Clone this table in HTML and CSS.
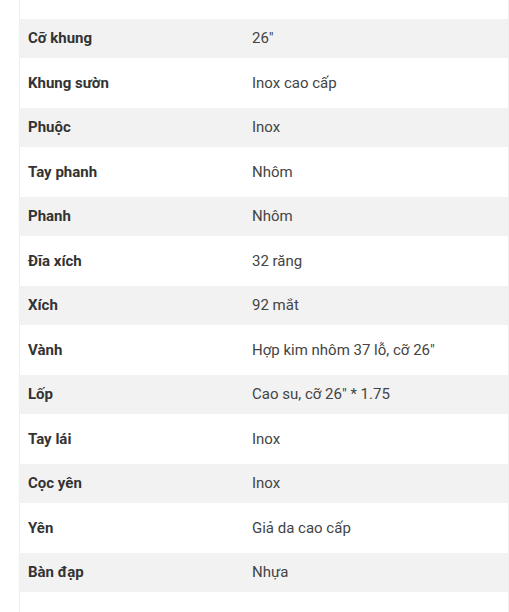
FILE: index.html
```html
<!DOCTYPE html>
<html lang="vi">
<head>
<meta charset="utf-8">
<link rel="stylesheet" href="styles.css">
</head>
<body>
<div class="wrap">
  <div class="specs">
    <div class="row odd"><div class="k">Cỡ khung</div><div class="v">26"</div></div>
    <div class="row even"><div class="k">Khung sườn</div><div class="v">Inox cao cấp</div></div>
    <div class="row odd"><div class="k">Phuộc</div><div class="v">Inox</div></div>
    <div class="row even"><div class="k">Tay phanh</div><div class="v">Nhôm</div></div>
    <div class="row odd"><div class="k">Phanh</div><div class="v">Nhôm</div></div>
    <div class="row even"><div class="k">Đĩa xích</div><div class="v">32 răng</div></div>
    <div class="row odd"><div class="k">Xích</div><div class="v">92 mắt</div></div>
    <div class="row even"><div class="k">Vành</div><div class="v">Hợp kim nhôm 37 lỗ, cỡ 26"</div></div>
    <div class="row odd"><div class="k">Lốp</div><div class="v">Cao su, cỡ 26" * 1.75</div></div>
    <div class="row even"><div class="k">Tay lái</div><div class="v">Inox</div></div>
    <div class="row odd"><div class="k">Cọc yên</div><div class="v">Inox</div></div>
    <div class="row even"><div class="k">Yên</div><div class="v">Giả da cao cấp</div></div>
    <div class="row odd"><div class="k">Bàn đạp</div><div class="v">Nhựa</div></div>
  </div>
</div>
</body>
</html>
```

FILE: styles.css
```css
html, body {
  margin: 0;
  padding: 0;
  background: #fff;
}
body {
  font-family: Roboto, "Liberation Sans", sans-serif;
  font-size: 15px;
}
.wrap {
  margin-left: 19px;
  width: 490px;
  height: 612px;
  border-left: 1px solid #eeeeee;
  border-right: 1px solid #eeeeee;
  padding-top: 19px;
  box-sizing: border-box;
}
.specs {
  display: flex;
  flex-direction: column;
}
.row {
  display: grid;
  grid-template-columns: 224px 1fr;
  align-items: center;
  padding: 0 8px;
}
.row.odd {
  height: 39px;
  background: #f2f2f2;
}
.row.even {
  height: 50px;
}
.k {
  font-weight: 700;
  color: #333333;
  margin-top: -1px;
}
.v {
  color: #444444;
  margin-top: -1px;
}
```
